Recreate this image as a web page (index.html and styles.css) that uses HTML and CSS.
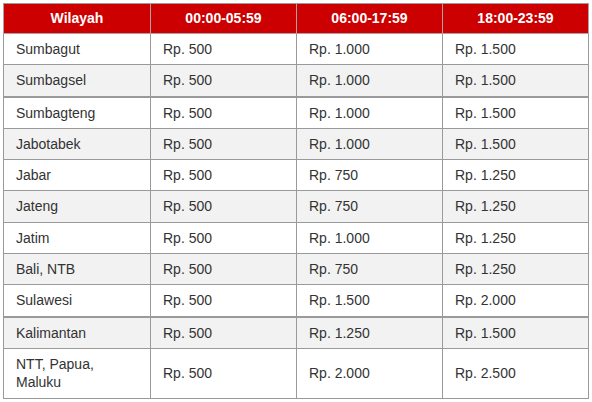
FILE: index.html
```html
<!DOCTYPE html>
<html lang="id">
<head>
<meta charset="utf-8">
<title>Tarif</title>
<link rel="stylesheet" href="styles.css">
</head>
<body>
<div class="wrap">
<table class="tarif">
  <colgroup><col class="c1"><col class="c2"><col class="c3"><col class="c4"></colgroup>
  <thead>
    <tr><th>Wilayah</th><th>00:00-05:59</th><th>06:00-17:59</th><th>18:00-23:59</th></tr>
  </thead>
  <tbody>
    <tr><td>Sumbagut</td><td>Rp. 500</td><td>Rp. 1.000</td><td>Rp. 1.500</td></tr>
    <tr class="alt"><td>Sumbagsel</td><td>Rp. 500</td><td>Rp. 1.000</td><td>Rp. 1.500</td></tr>
    <tr class="sep"><td>Sumbagteng</td><td>Rp. 500</td><td>Rp. 1.000</td><td>Rp. 1.500</td></tr>
    <tr class="alt"><td>Jabotabek</td><td>Rp. 500</td><td>Rp. 1.000</td><td>Rp. 1.500</td></tr>
    <tr><td>Jabar</td><td>Rp. 500</td><td>Rp. 750</td><td>Rp. 1.250</td></tr>
    <tr class="alt"><td>Jateng</td><td>Rp. 500</td><td>Rp. 750</td><td>Rp. 1.250</td></tr>
    <tr><td>Jatim</td><td>Rp. 500</td><td>Rp. 1.000</td><td>Rp. 1.250</td></tr>
    <tr class="alt"><td>Bali, NTB</td><td>Rp. 500</td><td>Rp. 750</td><td>Rp. 1.250</td></tr>
    <tr><td>Sulawesi</td><td>Rp. 500</td><td>Rp. 1.500</td><td>Rp. 2.000</td></tr>
    <tr class="alt sep"><td>Kalimantan</td><td>Rp. 500</td><td>Rp. 1.250</td><td>Rp. 1.500</td></tr>
    <tr><td>NTT, Papua,<br>Maluku</td><td>Rp. 500</td><td>Rp. 2.000</td><td>Rp. 2.500</td></tr>
  </tbody>
</table>
</div>
</body>
</html>
```
FILE: styles.css
```css
html, body {
  margin: 0;
  padding: 0;
  background: #ffffff;
}
.wrap {
  padding: 3px 0 0 3px;
}
.tarif {
  border-collapse: collapse;
  width: 585px;
  table-layout: fixed;
  font-family: "Liberation Sans", Arial, sans-serif;
  font-size: 14px;
  color: #333333;
  border: 1px solid #9a9a9a;
}
.c1 { width: 147px; }
.c2 { width: 146px; }
.c3 { width: 146px; }
.c4 { width: 146px; }
.tarif th {
  background: #cc0000;
  color: #ffffff;
  font-weight: bold;
  text-align: center;
  padding: 6px 12px;
  line-height: 17px;
  border: 1px solid #b0a0a0;
  border-top-color: #9a9a9a;
}
.tarif td {
  padding: 6px 12px;
  line-height: 18.3px;
  text-align: left;
  vertical-align: middle;
  border: 1px solid #9a9a9a;
}
.tarif tr.alt td {
  background: #f2f2f2;
}
.tarif tr.sep td {
  border-top: 2px solid #9a9a9a;
}
```
